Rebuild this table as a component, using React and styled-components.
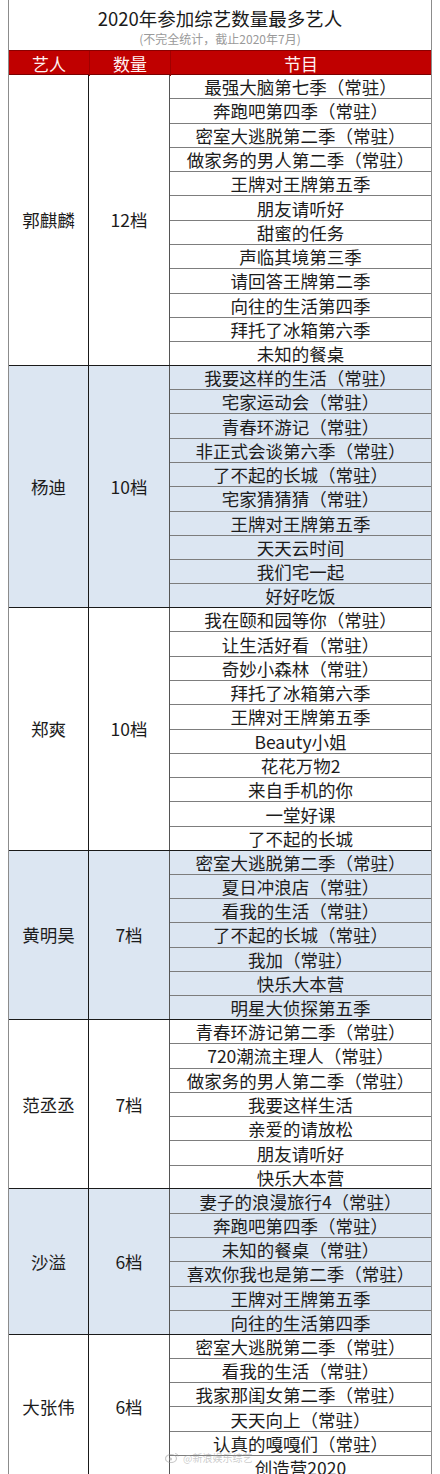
import React from 'react';
import styled, { createGlobalStyle } from 'styled-components';

const ROW = 24.29;

const GlobalStyle = createGlobalStyle`
  html, body {
    margin: 0;
    padding: 0;
    background: #ffffff;
  }
  body {
    font-family: "Noto Sans CJK SC", "Noto Sans", sans-serif;
    color: #1c1c1c;
  }
`;

const Page = styled.div`
  position: relative;
  width: 440px;
  height: 1474px;
  overflow: hidden;
  padding-left: 8px;
  box-sizing: border-box;
`;

const Table = styled.div`
  width: 424px;
  border-left: 1px solid #8c8c8c;
  border-right: 1px solid #8c8c8c;
  box-sizing: border-box;
`;

const TitleBlock = styled.div`
  height: 50px;
  display: flex;
  flex-direction: column;
  align-items: center;
  box-sizing: border-box;
  padding-top: 4px;
`;

const Title = styled.div`
  font-size: 18.5px;
  line-height: 28px;
  color: #1a1a1a;
`;

const Subtitle = styled.div`
  font-size: 12px;
  line-height: 14px;
  color: #9a9a9a;
`;

const Grid = styled.div`
  display: grid;
  grid-template-columns: 80px 81px 1fr;
`;

const HeaderRow = styled(Grid)`
  height: 25px;
  background: #c00000;
  border-top: 1px solid #8a0000;
  border-bottom: 1px solid #7a0000;
  box-sizing: border-box;
`;

const HeaderCell = styled.div`
  display: flex;
  align-items: center;
  justify-content: center;
  color: #fff2f2;
  font-size: 17px;
  border-left: ${(p) => (p.$first ? 'none' : '1px solid #a00000')};
`;

const Group = styled(Grid)`
  background: ${(p) => (p.$tint ? '#dce6f2' : '#ffffff')};
  border-bottom: 1.5px solid #1a1a1a;
`;

const NameCell = styled.div`
  display: flex;
  align-items: center;
  justify-content: center;
  font-size: 17.5px;
  border-right: 1.5px solid #1a1a1a;
`;

const CountCell = styled(NameCell)`
  border-right: 1px solid #555555;
`;

const ProgramList = styled.div`
  display: flex;
  flex-direction: column;
`;

const Program = styled.div`
  height: ${(p) => (p.$last ? ROW - 1.5 : ROW)}px;
  box-sizing: border-box;
  display: flex;
  align-items: center;
  justify-content: center;
  font-size: 17.5px;
  white-space: nowrap;
  border-bottom: ${(p) => (p.$last ? 'none' : '1px solid #7d7d7d')};
`;

const Watermark = styled.div`
  position: absolute;
  left: 165px;
  top: 1452px;
  display: flex;
  align-items: center;
  gap: 4px;
  font-size: 10px;
  line-height: 10px;
  color: rgba(150, 150, 150, 0.5);
`;

const data = [
  {
    name: '郭麒麟',
    count: '12档',
    shows: [
      '最强大脑第七季（常驻）',
      '奔跑吧第四季（常驻）',
      '密室大逃脱第二季（常驻）',
      '做家务的男人第二季（常驻）',
      '王牌对王牌第五季',
      '朋友请听好',
      '甜蜜的任务',
      '声临其境第三季',
      '请回答王牌第二季',
      '向往的生活第四季',
      '拜托了冰箱第六季',
      '未知的餐桌',
    ],
  },
  {
    name: '杨迪',
    count: '10档',
    shows: [
      '我要这样的生活（常驻）',
      '宅家运动会（常驻）',
      '青春环游记（常驻）',
      '非正式会谈第六季（常驻）',
      '了不起的长城（常驻）',
      '宅家猜猜猜（常驻）',
      '王牌对王牌第五季',
      '天天云时间',
      '我们宅一起',
      '好好吃饭',
    ],
  },
  {
    name: '郑爽',
    count: '10档',
    shows: [
      '我在颐和园等你（常驻）',
      '让生活好看（常驻）',
      '奇妙小森林（常驻）',
      '拜托了冰箱第六季',
      '王牌对王牌第五季',
      'Beauty小姐',
      '花花万物2',
      '来自手机的你',
      '一堂好课',
      '了不起的长城',
    ],
  },
  {
    name: '黄明昊',
    count: '7档',
    shows: [
      '密室大逃脱第二季（常驻）',
      '夏日冲浪店（常驻）',
      '看我的生活（常驻）',
      '了不起的长城（常驻）',
      '我加（常驻）',
      '快乐大本营',
      '明星大侦探第五季',
    ],
  },
  {
    name: '范丞丞',
    count: '7档',
    shows: [
      '青春环游记第二季（常驻）',
      '720潮流主理人（常驻）',
      '做家务的男人第二季（常驻）',
      '我要这样生活',
      '亲爱的请放松',
      '朋友请听好',
      '快乐大本营',
    ],
  },
  {
    name: '沙溢',
    count: '6档',
    shows: [
      '妻子的浪漫旅行4（常驻）',
      '奔跑吧第四季（常驻）',
      '未知的餐桌（常驻）',
      '喜欢你我也是第二季（常驻）',
      '王牌对王牌第五季',
      '向往的生活第四季',
    ],
  },
  {
    name: '大张伟',
    count: '6档',
    shows: [
      '密室大逃脱第二季（常驻）',
      '看我的生活（常驻）',
      '我家那闺女第二季（常驻）',
      '天天向上（常驻）',
      '认真的嘎嘎们（常驻）',
      '创造营2020',
    ],
  },
];

const WeiboMark = () => (
  <svg width="14" height="11" viewBox="0 0 14 11">
    <ellipse cx="6" cy="6.5" rx="5.5" ry="4" fill="none" stroke="currentColor" strokeWidth="1.2" />
    <circle cx="5.5" cy="7" r="1.6" fill="currentColor" />
    <path d="M10 1.5 a3 3 0 0 1 3 3" fill="none" stroke="currentColor" strokeWidth="1" />
  </svg>
);

export default function App() {
  return (
    <>
      <GlobalStyle />
      <Page>
        <Table>
          <TitleBlock>
            <Title>2020年参加综艺数量最多艺人</Title>
            <Subtitle>(不完全统计，截止2020年7月)</Subtitle>
          </TitleBlock>
          <HeaderRow>
            <HeaderCell $first>艺人</HeaderCell>
            <HeaderCell>数量</HeaderCell>
            <HeaderCell>节目</HeaderCell>
          </HeaderRow>
          {data.map((g, i) => (
            <Group key={g.name} $tint={i % 2 === 1}>
              <NameCell>{g.name}</NameCell>
              <CountCell>{g.count}</CountCell>
              <ProgramList>
                {g.shows.map((s, j) => (
                  <Program key={s} $last={j === g.shows.length - 1}>
                    {s}
                  </Program>
                ))}
              </ProgramList>
            </Group>
          ))}
        </Table>
        <Watermark>
          <WeiboMark />
          <span>@新浪娱乐综艺</span>
        </Watermark>
      </Page>
    </>
  );
}
